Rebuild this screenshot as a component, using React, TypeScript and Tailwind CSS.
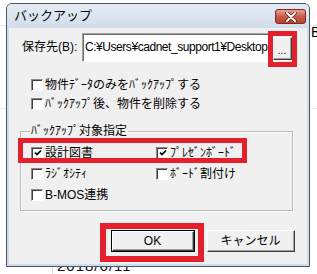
import React from "react";

const F = "font-['Liberation_Sans','Noto_Sans_CJK_JP',sans-serif]";

function Box({ checked }: { checked?: boolean }) {
  return (
    <div className="w-[12px] h-[12px] border-t border-l border-[#8a8a8a] border-r-white border-b-white border-r border-b bg-white shrink-0 flex items-center justify-center">
      <div className="w-[10px] h-[10px] border-t border-l border-[#404040] flex items-center justify-center">
        {checked && (
          <svg width="8" height="8" viewBox="0 0 8 8">
            <polyline points="1,3.5 3,5.5 7,1.5" fill="none" stroke="#000" strokeWidth="1.7" />
          </svg>
        )}
      </div>
    </div>
  );
}

function Check({ label, checked, w }: { label: string; checked?: boolean; w?: string }) {
  return (
    <div className={`flex items-center gap-[2px] ${w ?? ""}`}>
      <Box checked={checked} />
      <span className="text-[12px] leading-[14px] text-black whitespace-nowrap">{label}</span>
    </div>
  );
}

function Btn({ children, def, w }: { children: React.ReactNode; def?: boolean; w: string }) {
  return (
    <div className={`${w} h-[22px] ${def ? "border border-black" : ""}`}>
      <div className="w-full h-full border-t border-l border-white border-r border-b border-r-[#404040] border-b-[#404040] bg-[#f0f0f0]">
        <div className="w-full h-full border-r border-b border-[#a0a0a0] flex items-center justify-center text-[12px] leading-[14px] text-black">
          {children}
        </div>
      </div>
    </div>
  );
}

export default function App() {
  return (
    <div className={`relative w-[317px] h-[274px] bg-white overflow-hidden ${F}`}>
      {/* background sheet */}
      <div className="absolute left-0 top-[25px] w-[317px] h-px bg-[#e6e6e6]" />
      <div className="absolute left-0 top-[108px] w-[317px] h-px bg-[#ececec]" />
      <div className="absolute left-[52px] top-[250px] w-px h-[30px] bg-[#dcdcdc]" />
      <div className="absolute left-[311px] top-[24px] text-[14px] leading-[16px] text-black">B</div>
      <div className="absolute left-[57px] top-[257px] text-[15px] leading-[18px] text-[#111] tracking-[1px]">2018/6/11</div>

      {/* dialog window */}
      <div className="absolute left-[6px] top-[3px] w-[304px] h-[264px] border border-[#4d5561] rounded-t-[6px] bg-[#cfdceb] flex flex-col">
        <div className="relative h-[24px] shrink-0 rounded-t-[5px] bg-gradient-to-b from-[#e4ebf4] to-[#d3deeb] flex items-center pl-[7px]">
          <span className="text-[13px] leading-[16px] text-black">バックアップ</span>
          <div className="absolute left-[268px] top-[5px] w-[31px] h-[15px] rounded-[3px] border border-[#7a2a24] bg-gradient-to-b from-[#e8a393] via-[#c85c48] to-[#b8402c] flex items-center justify-center">
            <svg width="12" height="10" viewBox="0 0 12 10">
              <path d="M2 1 L10 9 M10 1 L2 9" stroke="#5a1a14" strokeWidth="3.4" strokeLinecap="round" />
              <path d="M2 1 L10 9 M10 1 L2 9" stroke="#fff" strokeWidth="2" strokeLinecap="round" />
            </svg>
          </div>
        </div>
        <div className="flex-1 mx-[2px] mb-[2px] bg-[#f0f0f0] flex flex-col">
          {/* path row */}
          <div className="flex items-start pt-[5px] pl-[13px]">
            <span className="w-[60px] mt-[7px] text-[12px] leading-[14px] text-black whitespace-nowrap">保存先(B):</span>
            <div className="w-[189px] h-[29px] border-t border-l border-[#a0a0a0] border-r border-b border-r-white border-b-white bg-white">
              <div className="w-full h-full border-t border-l border-[#696969] overflow-hidden pl-[1px] pt-[5px] text-[12px] leading-[14px] tracking-[-0.45px] text-black whitespace-nowrap">
                C:¥Users¥cadnet_support1¥Desktop
              </div>
            </div>
            <div className="ml-[2px] mt-[4px]">
              <Btn w="w-[19px] h-[23px]">
                <span className="mt-[6px] text-[10px]">...</span>
              </Btn>
            </div>
          </div>

          <div className="mt-[13px] pl-[22px] flex flex-col">
            <div className="h-[19px] flex items-center">
              <Check label="物件ﾃﾞｰﾀのみをﾊﾞｯｸｱｯﾌﾟする" />
            </div>
            <div className="h-[19px] flex items-center">
              <Check label="ﾊﾞｯｸｱｯﾌﾟ後、物件を削除する" />
            </div>
          </div>

          {/* group */}
          <div className="relative mt-[18px] ml-[11px] w-[273px] border border-[#b8b8b8] shadow-[inset_1px_1px_0_#fff,1px_1px_0_#fff] pt-[10px] pb-[5px] pl-[10px]">
            <span className="absolute left-[9px] top-[-8px] bg-[#f0f0f0] px-[1px] text-[12px] leading-[14px] text-black whitespace-nowrap">ﾊﾞｯｸｱｯﾌﾟ対象指定</span>
            <div className="h-[21px] flex items-center">
              <Check w="w-[125px]" label="設計図書" checked />
              <Check label="ﾌﾟﾚｾﾞﾝﾎﾞｰﾄﾞ" checked />
            </div>
            <div className="h-[21px] flex items-center">
              <Check w="w-[125px]" label="ﾗｼﾞｵｼﾃｨ" />
              <Check label="ﾎﾞｰﾄﾞ割付け" />
            </div>
            <div className="h-[21px] flex items-center">
              <Check label="B-MOS連携" />
            </div>
          </div>

          {/* buttons */}
          <div className="mt-[19px] pl-[102px] flex gap-[12px]">
            <Btn def w="w-[84px]">OK</Btn>
            <Btn w="w-[88px]">キャンセル</Btn>
          </div>
        </div>
      </div>

      {/* red highlight boxes */}
      <div className="absolute left-[268px] top-[31px] w-[29px] h-[36px] border-[5px] border-[#e3202b]" />
      <div className="absolute left-[18px] top-[138px] w-[229px] h-[25px] border-[5px] border-[#e3202b]" />
      <div className="absolute left-[100px] top-[223px] w-[104px] h-[39px] border-[6px] border-[#e3202b]" />
    </div>
  );
}
